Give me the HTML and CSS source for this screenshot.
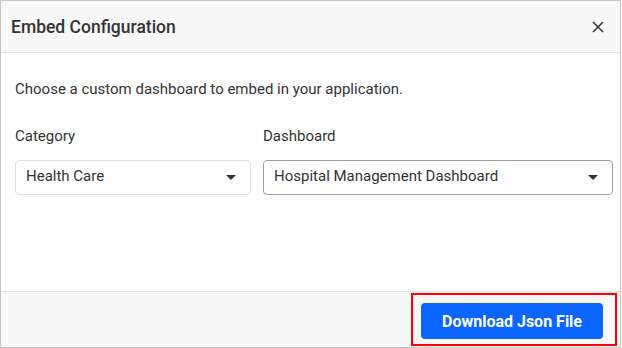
FILE: index.html
```html
<!DOCTYPE html>
<html lang="en">

<head>
    <meta charset="UTF-8">
    <meta name="viewport" content="width=device-width, initial-scale=1.0">
    <title>Embed Configuration</title>
    <link rel="stylesheet" href="styles.css">
</head>

<body>
    <div class="dialog">
        <div class="dialog-header">
            <div class="dialog-title">Embed Configuration</div>
            <div class="close-btn">
                <svg width="12" height="12" viewBox="0 0 12 12">
                    <path d="M1 1 L11 11 M11 1 L1 11" stroke="#333" stroke-width="1.5" fill="none" />
                </svg>
            </div>
        </div>
        <div class="dialog-content">
            <p class="intro">Choose a custom dashboard to embed in your application.</p>
            <div class="fields">
                <div class="form-group">
                    <label>Category</label>
                    <div class="dropdown">
                        <span>Health Care</span>
                        <span class="caret"></span>
                    </div>
                </div>
                <div class="form-group">
                    <label>Dashboard</label>
                    <div class="dropdown focused">
                        <span>Hospital Management Dashboard</span>
                        <span class="caret"></span>
                    </div>
                </div>
            </div>
        </div>
        <div class="dialog-footer">
            <div class="highlight">
                <button>Download Json File</button>
            </div>
        </div>
    </div>
</body>

</html>
```

FILE: styles.css
```css
* {
    margin: 0;
    padding: 0;
    box-sizing: border-box;
    font-family: Roboto, "Liberation Sans", sans-serif;
}

body {
    background-color: white;
    color: #333;
}

.dialog {
    width: 621px;
    height: 348px;
    border: 1px solid #c6c6c6;
    display: flex;
    flex-direction: column;
    background: white;
}

.dialog-header {
    height: 52px;
    display: flex;
    align-items: center;
    justify-content: space-between;
    padding: 0 16px 0 10px;
    background: #f8f8f8;
    border-bottom: 1px solid #e0e0e0;
}

.dialog-title {
    font-size: 17.5px;
    font-weight: 500;
    color: #333;
}

.close-btn {
    width: 12px;
    height: 12px;
    display: flex;
    cursor: pointer;
}

.dialog-content {
    flex: 1;
    padding: 26px 7px 0 14px;
}

.intro {
    font-size: 15px;
    line-height: 20px;
    margin-bottom: 27px;
}

.fields {
    display: grid;
    grid-template-columns: 236px 350px;
    column-gap: 12px;
}

.form-group label {
    display: block;
    font-size: 15px;
    line-height: 20px;
    margin-bottom: 14px;
}

.dropdown {
    height: 35px;
    display: flex;
    align-items: center;
    justify-content: space-between;
    padding: 0 14px 3px 10px;
    border: 1px solid #e0e0e0;
    border-radius: 4px;
    font-size: 15px;
    background: white;
}

.dropdown.focused {
    border-color: #9e9e9e;
}

.caret {
    width: 0;
    height: 0;
    margin-top: 2px;
    border-left: 5px solid transparent;
    border-right: 5px solid transparent;
    border-top: 5px solid #333;
}

.dialog-footer {
    height: 56px;
    display: flex;
    justify-content: flex-end;
    padding: 1px 3px 1px 0;
    background: #f8f8f8;
    border-top: 1px solid #e0e0e0;
}

.highlight {
    width: 206px;
    border: 2px solid #ff0000;
    padding: 8px 11px 5px 8px;
}

button {
    width: 182px;
    height: 36px;
    background: #0a66ff;
    color: white;
    border: none;
    border-radius: 4px;
    font-size: 16px;
    font-weight: 700;
    cursor: pointer;
}
```
